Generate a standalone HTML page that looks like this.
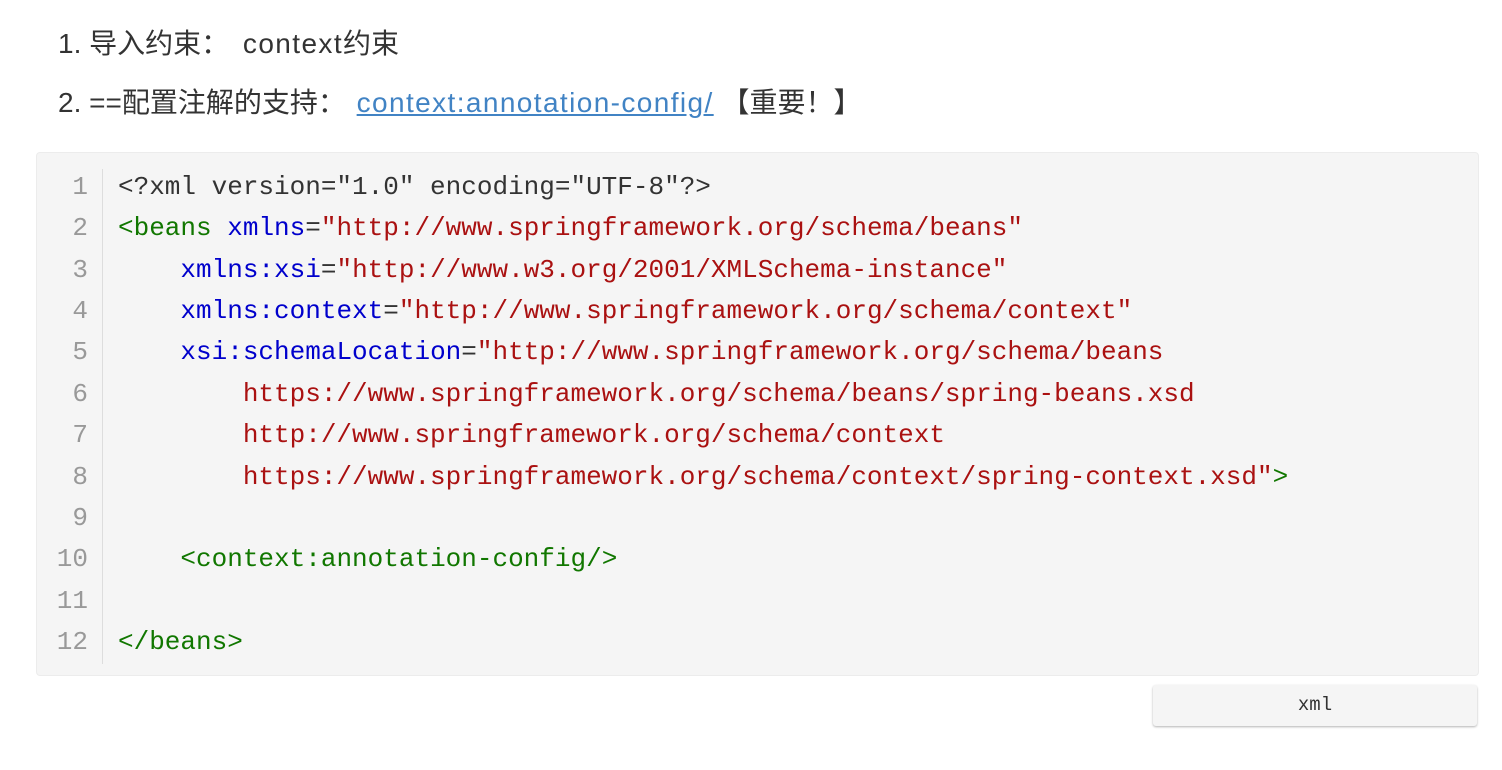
<!DOCTYPE html>
<html><head><meta charset="utf-8"><style>
body{margin:0;width:1502px;height:770px;background:#fff;overflow:hidden;font-family:"Liberation Sans","Noto Sans CJK SC",sans-serif;color:#333}
.p{position:absolute;left:58px;font-size:28px;line-height:32px;white-space:nowrap}
.l{letter-spacing:1.4px}
a{color:#4183c4;text-decoration:underline}
.code{position:absolute;left:36px;top:152px;width:1443px;height:524px;background:#f5f5f5;border:1px solid #ececec;border-radius:4px;box-sizing:border-box}
.gut{position:absolute;left:0;top:16px;width:65px;border-right:1px solid #ddd;height:495px}
.ln,.cl{position:absolute;font-family:"Liberation Mono","DejaVu Sans Mono",monospace;font-size:26px;line-height:41.36px;white-space:pre}
.ln{left:0;width:51px;text-align:right;top:14px;color:#999}
.cl{left:81px;top:14px;color:#333}
.t{color:#170}.a{color:#00c}.s{color:#a11}
.btn{position:absolute;left:1153px;top:685px;width:324px;height:41px;background:#f5f5f5;border-radius:3px;box-shadow:0 1px 2px rgba(0,0,0,.3);text-align:center;font-family:"Liberation Mono",monospace;font-size:19px;line-height:41px;color:#333}
</style></head><body>
<div class="p" style="top:28px">1. 导入约束： <span class="l" style="margin-left:6px">context</span>约束</div>
<div class="p" style="top:87px">2. ==配置注解的支持： <a class="l" style="margin-left:3px">context:annotation-config/</a> 【重要！】</div>
<div class="code"><div class="gut"></div>
<div class="ln">1
2
3
4
5
6
7
8
9
10
11
12</div>
<div class="cl">&lt;?xml version="1.0" encoding="UTF-8"?&gt;
<span class="t">&lt;beans</span> <span class="a">xmlns</span>=<span class="s">"http://www.springframework.org/schema/beans"</span>
    <span class="a">xmlns:xsi</span>=<span class="s">"http://www.w3.org/2001/XMLSchema-instance"</span>
    <span class="a">xmlns:context</span>=<span class="s">"http://www.springframework.org/schema/context"</span>
    <span class="a">xsi:schemaLocation</span>=<span class="s">"http://www.springframework.org/schema/beans
        https://www.springframework.org/schema/beans/spring-beans.xsd
        http://www.springframework.org/schema/context
        https://www.springframework.org/schema/context/spring-context.xsd"</span><span class="t">&gt;</span>

    <span class="t">&lt;context:annotation-config/&gt;</span>

<span class="t">&lt;/beans&gt;</span></div>
</div>
<div class="btn">xml</div>
</body></html>
